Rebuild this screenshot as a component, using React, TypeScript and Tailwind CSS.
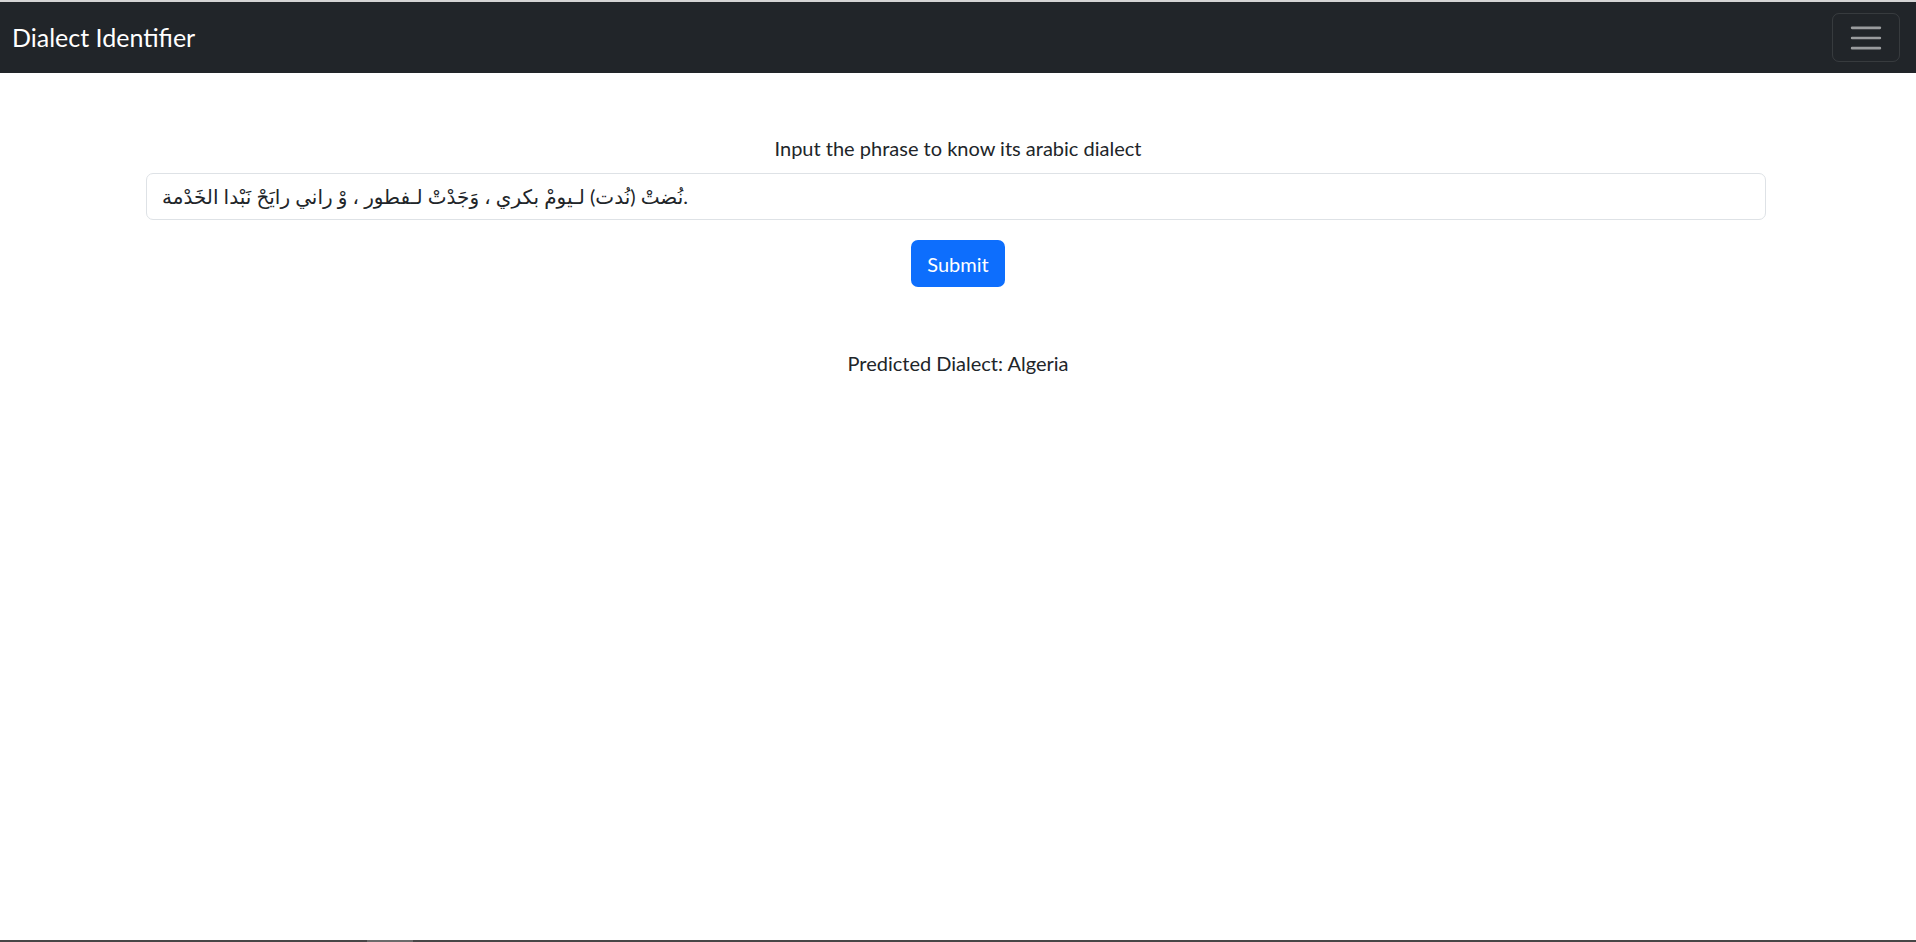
import React, { useState } from 'react';

const font = { fontFamily: '"Segoe UI", Lato, "DejaVu Sans", sans-serif' };

const App: React.FC = () => {
  const [text, setText] = useState('نُضتْ (نُدت) لـيومْ بكري ، وَجَدْتْ لـفطور ، وْ راني رايَحْ نَبْدا الخَدْمة.');

  return (
    <div className="min-h-[942px] flex flex-col bg-white border-t-2 border-[#d4d4d4] text-[#212529] text-[20px] leading-[1.5] font-['Segoe_UI','Lato','DejaVu_Sans',sans-serif]">
      <nav className="h-[71px] bg-[#212529] flex items-center justify-between pl-[12px] pr-[16px]">
        <a href="#" className="text-[25px] text-white leading-[1.5]">Dialect Identifier</a>
        <button className="w-[68px] h-[49px] border border-[rgba(255,255,255,0.1)] rounded-[7px] flex items-center justify-center">
          <svg width="38" height="38" viewBox="0 0 30 30">
            <path d="M4 7h22M4 15h22M4 23h22" stroke="rgba(255,255,255,0.55)" strokeWidth="2" strokeLinecap="round" />
          </svg>
        </button>
      </nav>

      <main className="flex-1 flex flex-col items-center pt-[60px]">
        <label className="mb-[10px]">Input the phrase to know its arabic dialect</label>
        <input
          value={text}
          onChange={e => setText(e.target.value)}
          style={font}
          className="w-[1620px] mr-[4px] h-[47px] px-[15px] border border-[#dee2e6] rounded-[7px] text-[20px] text-[#212529] outline-none"
        />
        <button className="mt-[20px] h-[47px] px-[16px] bg-[#0d6efd] text-white rounded-[7px]">Submit</button>
        <p className="mt-[61px]">Predicted Dialect: Algeria</p>
      </main>

      <div className="h-[2px] bg-[#474747] flex">
        <div className="ml-[367px] w-[46px] bg-[#6b6b6b]" />
      </div>
    </div>
  );
};

export default App;
